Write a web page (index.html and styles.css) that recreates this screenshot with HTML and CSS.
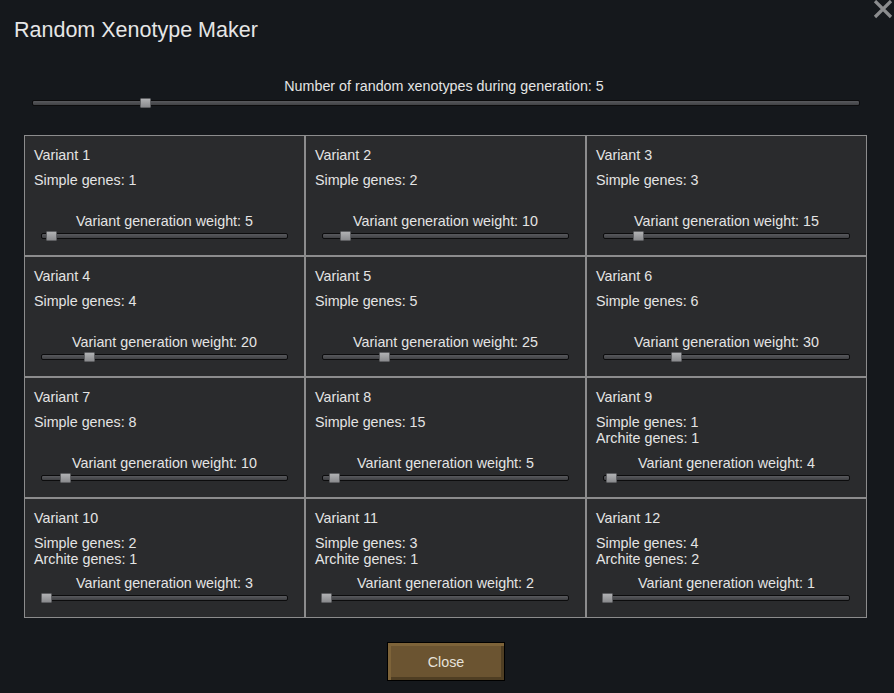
FILE: index.html
```html
<!DOCTYPE html>
<html lang="en">

<head>
  <meta charset="UTF-8">
  <title>Random Xenotype Maker</title>
  <link rel="stylesheet" href="styles.css">
</head>

<body>
  <div class="window">
    <h1 class="title">Random Xenotype Maker</h1>

    <!-- close icon, top right -->
    <svg class="close-x" width="20" height="20" viewBox="0 0 20 20">
      <path d="M2 1 L18 17 M18 1 L2 17" stroke="#8b8c8e" stroke-width="3.2" />
    </svg>

    <section class="generation">
      <div class="slider-label">Number of random xenotypes during generation: 5</div>
      <div class="slider">
        <div class="track"></div>
        <div class="thumb" style="left: 108px"></div>
      </div>
    </section>

    <section class="variants">
      <div class="variant">
        <div class="name">Variant 1</div>
        <div class="genes">Simple genes: 1</div>
        <div class="weight">
          <div class="slider-label">Variant generation weight: 5</div>
          <div class="slider"><div class="track"></div><div class="thumb" style="left: 5px"></div></div>
        </div>
      </div>
      <div class="variant">
        <div class="name">Variant 2</div>
        <div class="genes">Simple genes: 2</div>
        <div class="weight">
          <div class="slider-label">Variant generation weight: 10</div>
          <div class="slider"><div class="track"></div><div class="thumb" style="left: 18px"></div></div>
        </div>
      </div>
      <div class="variant">
        <div class="name">Variant 3</div>
        <div class="genes">Simple genes: 3</div>
        <div class="weight">
          <div class="slider-label">Variant generation weight: 15</div>
          <div class="slider"><div class="track"></div><div class="thumb" style="left: 30px"></div></div>
        </div>
      </div>

      <div class="variant">
        <div class="name">Variant 4</div>
        <div class="genes">Simple genes: 4</div>
        <div class="weight">
          <div class="slider-label">Variant generation weight: 20</div>
          <div class="slider"><div class="track"></div><div class="thumb" style="left: 43px"></div></div>
        </div>
      </div>
      <div class="variant">
        <div class="name">Variant 5</div>
        <div class="genes">Simple genes: 5</div>
        <div class="weight">
          <div class="slider-label">Variant generation weight: 25</div>
          <div class="slider"><div class="track"></div><div class="thumb" style="left: 57px"></div></div>
        </div>
      </div>
      <div class="variant">
        <div class="name">Variant 6</div>
        <div class="genes">Simple genes: 6</div>
        <div class="weight">
          <div class="slider-label">Variant generation weight: 30</div>
          <div class="slider"><div class="track"></div><div class="thumb" style="left: 68px"></div></div>
        </div>
      </div>

      <div class="variant">
        <div class="name">Variant 7</div>
        <div class="genes">Simple genes: 8</div>
        <div class="weight">
          <div class="slider-label">Variant generation weight: 10</div>
          <div class="slider"><div class="track"></div><div class="thumb" style="left: 19px"></div></div>
        </div>
      </div>
      <div class="variant">
        <div class="name">Variant 8</div>
        <div class="genes">Simple genes: 15</div>
        <div class="weight">
          <div class="slider-label">Variant generation weight: 5</div>
          <div class="slider"><div class="track"></div><div class="thumb" style="left: 7px"></div></div>
        </div>
      </div>
      <div class="variant">
        <div class="name">Variant 9</div>
        <div class="genes">Simple genes: 1<br>Archite genes: 1</div>
        <div class="weight">
          <div class="slider-label">Variant generation weight: 4</div>
          <div class="slider"><div class="track"></div><div class="thumb" style="left: 3px"></div></div>
        </div>
      </div>

      <div class="variant">
        <div class="name">Variant 10</div>
        <div class="genes">Simple genes: 2<br>Archite genes: 1</div>
        <div class="weight">
          <div class="slider-label">Variant generation weight: 3</div>
          <div class="slider"><div class="track"></div><div class="thumb" style="left: 0px"></div></div>
        </div>
      </div>
      <div class="variant">
        <div class="name">Variant 11</div>
        <div class="genes">Simple genes: 3<br>Archite genes: 1</div>
        <div class="weight">
          <div class="slider-label">Variant generation weight: 2</div>
          <div class="slider"><div class="track"></div><div class="thumb" style="left: -1px"></div></div>
        </div>
      </div>
      <div class="variant">
        <div class="name">Variant 12</div>
        <div class="genes">Simple genes: 4<br>Archite genes: 2</div>
        <div class="weight">
          <div class="slider-label">Variant generation weight: 1</div>
          <div class="slider"><div class="track"></div><div class="thumb" style="left: -1px"></div></div>
        </div>
      </div>
    </section>

    <footer class="actions">
      <button class="close-btn">Close</button>
    </footer>
  </div>
</body>

</html>
```

FILE: styles.css
```css
/* Basic styling */
html,
body {
  margin: 0;
  height: 100%;
}

body {
  font-family: "Liberation Sans", Arial, sans-serif;
  font-size: 14.3px;
  line-height: 16px;
  background-color: #15181c;
  color: #e4e4e4;
  overflow: hidden;
}

.window {
  position: relative;
  width: 894px;
  height: 693px;
}

.title {
  margin: 0;
  padding: 18px 0 0 14px;
  font-size: 21.5px;
  line-height: 24px;
  font-weight: normal;
  color: #e6e6e6;
}

.close-x {
  position: absolute;
  top: 0;
  right: 1px;
}

/* top slider */
.generation {
  margin: 36px 34px 0 32px;
}

.generation .slider-label {
  text-align: center;
  padding-right: 4px;
}

.generation .slider {
  margin-top: 4px;
}

/* slider parts */
.slider {
  position: relative;
  height: 10px;
}

.track {
  position: absolute;
  left: 0;
  right: 0;
  top: 2px;
  height: 6px;
  box-sizing: border-box;
  border: 1px solid #0c0c0d;
  border-radius: 2px;
  background: linear-gradient(#58595d, #404144);
}

.thumb {
  position: absolute;
  top: 0;
  width: 11px;
  height: 10px;
  box-sizing: border-box;
  border: 1px solid #5e5f62;
  border-radius: 1px;
  background: linear-gradient(#b0b1b3, #8a8b8e);
}

/* variants grid */
.variants {
  display: grid;
  grid-template-columns: repeat(3, 281px);
  grid-template-rows: 121px 121px 121px 120px;
  margin: 27px 0 0 24px;
}

.variant {
  display: flex;
  flex-direction: column;
  box-sizing: border-box;
  border: 1px solid #8c8c8d;
  background-color: #2a2b2d;
  padding: 11px 0 14px 9px;
}

.genes {
  margin-top: 9px;
}

.weight {
  margin-top: auto;
  padding-right: 9px;
}

.weight .slider-label {
  text-align: center;
}

.weight .slider {
  margin: 2px 7px 0 7px;
}

/* close button */
.actions {
  display: flex;
  justify-content: center;
  margin-top: 24px;
  padding-right: 2px;
}

.close-btn {
  width: 118px;
  height: 39px;
  padding: 0;
  font-family: "Liberation Sans", Arial, sans-serif;
  font-size: 14.3px;
  color: #e6e2da;
  background-color: #6b5431;
  border: 1px solid #000;
  box-shadow: inset 3px 3px 0 #7d6339, inset -3px -3px 0 #4f3e23;
  cursor: pointer;
}
```
